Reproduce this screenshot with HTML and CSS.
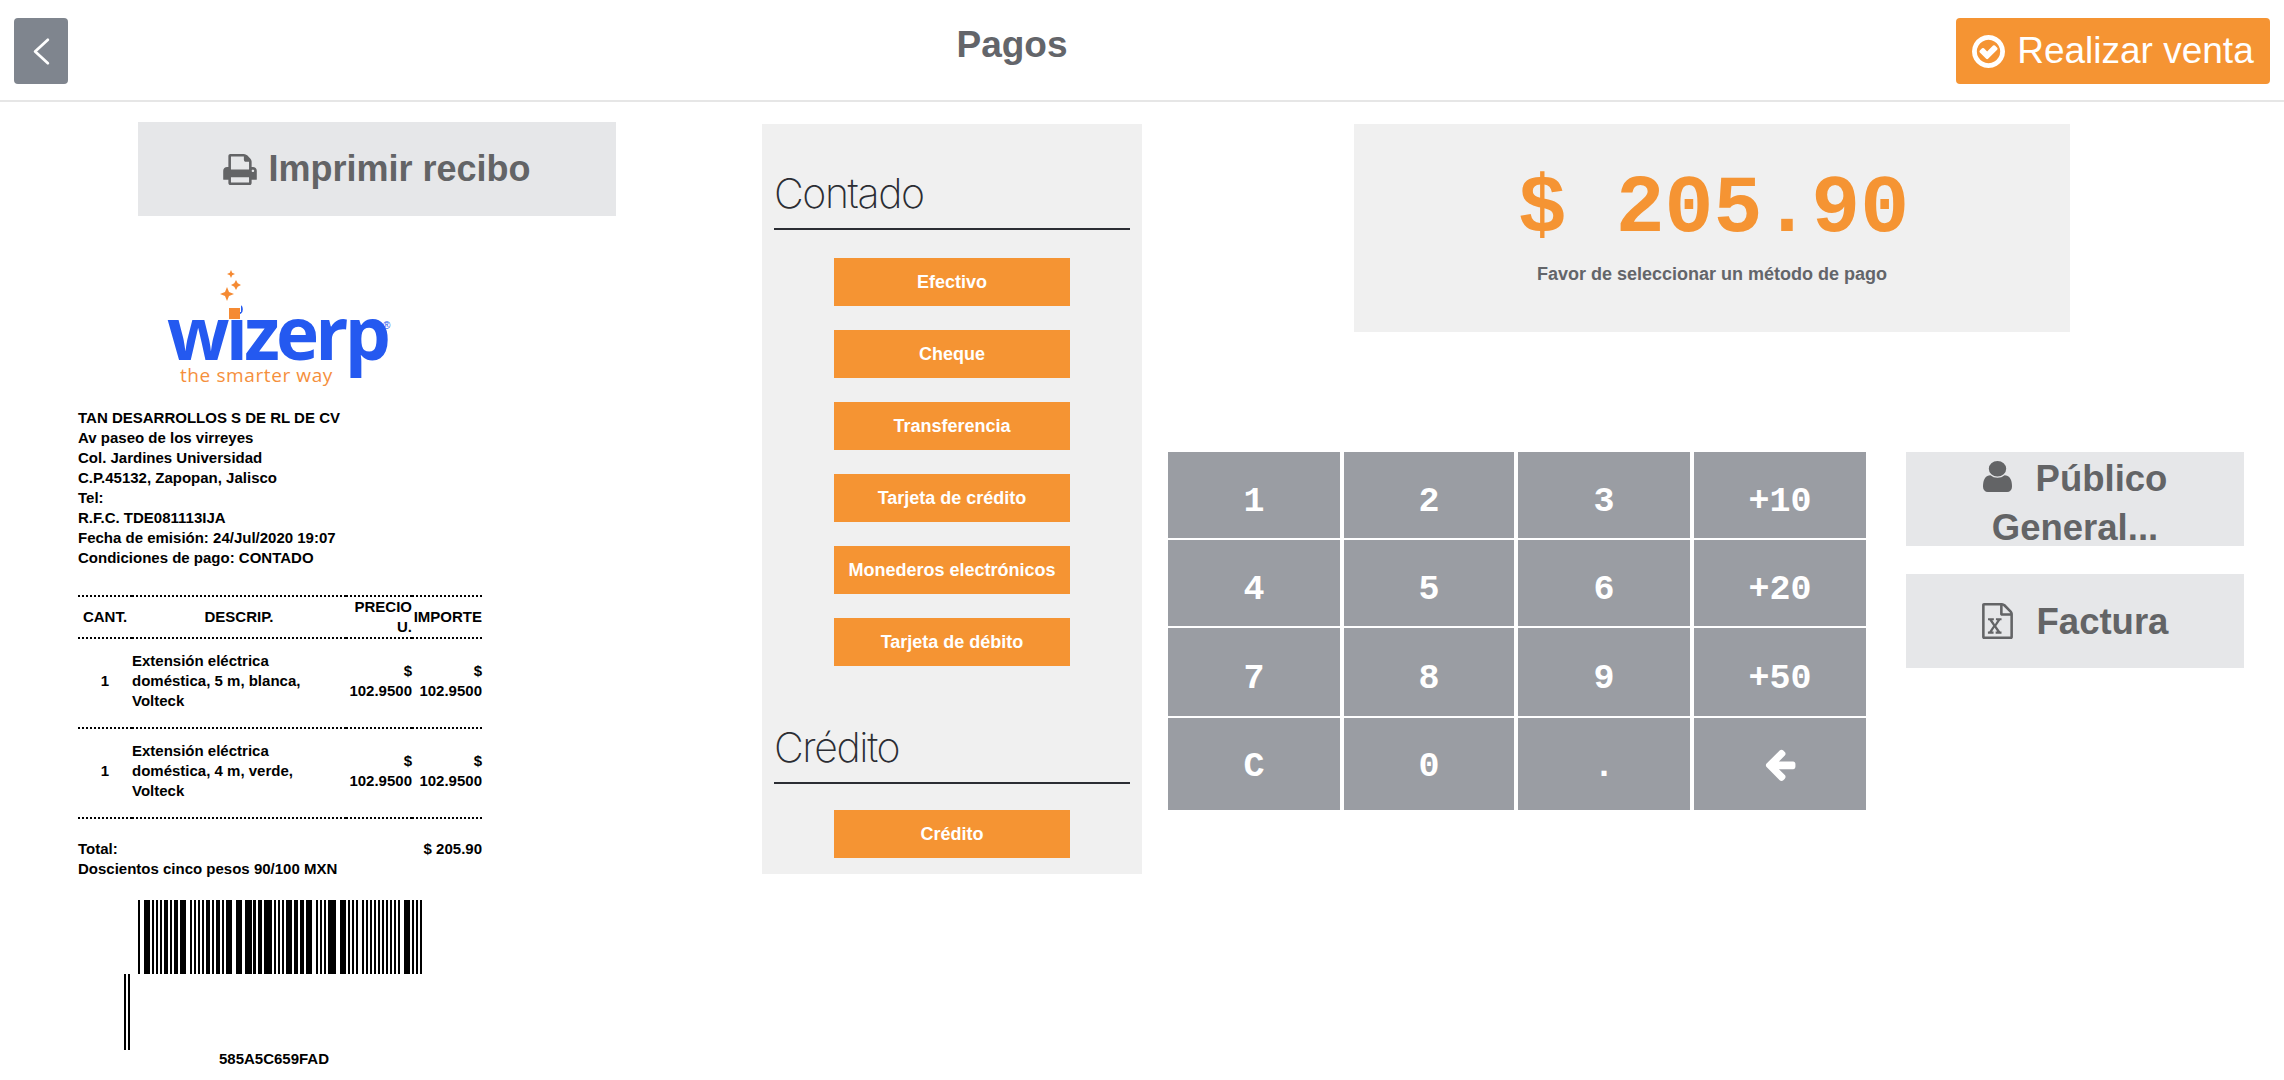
FILE: index.html
```html
<!DOCTYPE html>
<html lang="es">
<head>
<meta charset="utf-8">
<title>Pagos</title>
<link rel="stylesheet" href="styles.css">
</head>
<body>
<header class="topbar">
  <button class="back" aria-label="Volver">
    <svg class="back-icon" viewBox="0 0 16 26"><polyline points="14,2 2,13 14,24"/></svg>
  </button>
  <h1 class="title">Pagos</h1>
  <button class="sale">
    <svg class="sale-icon" viewBox="128 128 1536 1536"><path d="M1299 813l-422 422q-19 19-45 19t-45-19l-294-294q-19-19-19-45t19-45l102-102q19-19 45-19t45 19l147 147 275-275q19-19 45-19t45 19l102 102q19 19 19 45t-19 45zm141 83q0-148-73-273t-198-198-273-73-273 73-198 198-73 273 73 273 198 198 273 73 273-73 198-198 73-273zm224 0q0 209-103 385.5t-279.5 279.5-385.5 103-385.5-103-279.5-279.5-103-385.5 103-385.5 279.5-279.5 385.5-103 385.5 103 279.5 279.5 103 385.5z"/></svg>
    <span>Realizar venta</span>
  </button>
</header>

<main class="layout">
  <section class="left">
    <button class="print">
      <svg class="print-icon" viewBox="64 128 1664 1536"><path d="M448 1536h896v-256h-896v256zm0-640h896v-384h-160q-40 0-68-28t-28-68v-160h-640v640zm1152 64q0-26-19-45t-45-19-45 19-19 45 19 45 45 19 45-19 19-45zm128 0v416q0 13-9.5 22.5t-22.5 9.5h-224v160q0 40-28 68t-68 28h-960q-40 0-68-28t-28-68v-160h-224q-13 0-22.5-9.5t-9.5-22.5v-416q0-79 56.5-135.5t135.5-56.5h64v-544q0-40 28-68t68-28h672q40 0 88 20t76 48l152 152q28 28 48 76t20 88v256h64q79 0 135.5 56.5t56.5 135.5z"/></svg>
      <span>Imprimir recibo</span>
    </button>

    <div class="logo">
      <svg class="logo-stars" viewBox="0 0 26 36"><path d="M11 0l1.200 2.800 2.800 1.200-2.800 1.200-1.200 2.800-1.200-2.800-2.800-1.200 2.800-1.200zM16 10l1.700 3.300 3.300 1.700-3.300 1.700-1.700 3.300-1.700-3.300-3.300-1.700 3.300-1.700zM7 17l2 5 5 2-5 2-2 5-2-5-5-2 5-2z"/></svg>
      <span class="logo-dot"></span>
      <div class="logo-word">wizerp</div>
      <span class="logo-reg">®</span>
      <div class="logo-tag">the smarter way</div>
    </div>

    <div class="receipt">
      <p class="address">TAN DESARROLLOS S DE RL DE CV<br>Av paseo de los virreyes<br>Col. Jardines Universidad<br>C.P.45132, Zapopan, Jalisco<br>Tel:<br>R.F.C. TDE081113IJA<br>Fecha de emisión: 24/Jul/2020 19:07<br>Condiciones de pago: CONTADO</p>
      <table class="items">
        <colgroup><col class="c-qty"><col class="c-desc"><col class="c-price"><col class="c-total"></colgroup>
        <thead>
          <tr><th>CANT.</th><th>DESCRIP.</th><th class="num">PRECIO U.</th><th class="num">IMPORTE</th></tr>
        </thead>
        <tbody>
          <tr><td class="qty">1</td><td class="desc">Extensión eléctrica doméstica, 5 m, blanca, Volteck</td><td class="num">$ 102.9500</td><td class="num">$ 102.9500</td></tr>
          <tr><td class="qty">1</td><td class="desc">Extensión eléctrica doméstica, 4 m, verde, Volteck</td><td class="num">$ 102.9500</td><td class="num">$ 102.9500</td></tr>
        </tbody>
      </table>
      <div class="sum"><span>Total:</span><span>$ 205.90</span></div>
      <p class="words">Doscientos cinco pesos 90/100 MXN</p>
      <svg class="bars" viewBox="0 0 284 74"><path d="M0 0h2v74h-2zM6 0h6v74h-6zM14 0h2v74h-2zM18 0h2v74h-2zM22 0h2v74h-2zM26 0h4v74h-4zM32 0h2v74h-2zM36 0h4v74h-4zM42 0h6v74h-6zM52 0h2v74h-2zM56 0h2v74h-2zM60 0h2v74h-2zM64 0h2v74h-2zM68 0h4v74h-4zM74 0h2v74h-2zM78 0h4v74h-4zM84 0h2v74h-2zM88 0h4v74h-4zM92 0h2v74h-2zM98 0h6v74h-6zM107 0h7v74h-7zM115 0h3v74h-3zM120 0h4v74h-4zM126 0h8v74h-8zM136 0h2v74h-2zM140 0h2v74h-2zM144 0h2v74h-2zM148 0h6v74h-6zM156 0h4v74h-4zM162 0h4v74h-4zM168 0h6v74h-6zM178 0h2v74h-2zM182 0h2v74h-2zM186 0h2v74h-2zM190 0h8v74h-8zM202 0h6v74h-6zM210 0h2v74h-2zM214 0h2v74h-2zM218 0h2v74h-2zM224 0h2v74h-2zM228 0h2v74h-2zM232 0h2v74h-2zM236 0h2v74h-2zM240 0h2v74h-2zM244 0h2v74h-2zM248 0h2v74h-2zM252 0h2v74h-2zM256 0h2v74h-2zM260 0h2v74h-2zM266 0h6v74h-6zM274 0h2v74h-2zM278 0h2v74h-2zM282 0h2v74h-2z"/></svg>
      <svg class="bars-tail" viewBox="0 0 6 76"><path d="M0 0h2v76h-2zM4 0h2v76h-2z"/></svg>
      <div class="code">585A5C659FAD</div>
    </div>
  </section>

  <section class="methods">
    <h2 class="group first">Contado</h2>
    <div class="options">
      <button class="opt">Efectivo</button>
      <button class="opt">Cheque</button>
      <button class="opt">Transferencia</button>
      <button class="opt">Tarjeta de crédito</button>
      <button class="opt">Monederos electrónicos</button>
      <button class="opt">Tarjeta de débito</button>
    </div>
    <h2 class="group">Crédito</h2>
    <div class="options second">
      <button class="opt">Crédito</button>
    </div>
  </section>

  <section class="right">
    <div class="amount">
      <div class="amount-value">$ 205.90</div>
      <div class="amount-hint">Favor de seleccionar un método de pago</div>
    </div>
    <div class="lower">
      <div class="keypad">
        <button class="key">1</button><button class="key">2</button><button class="key">3</button><button class="key">+10</button>
        <button class="key">4</button><button class="key">5</button><button class="key">6</button><button class="key">+20</button>
        <button class="key">7</button><button class="key">8</button><button class="key">9</button><button class="key">+50</button>
        <button class="key">C</button><button class="key">0</button><button class="key">.</button>
        <button class="key" aria-label="Borrar"><svg class="key-icon" viewBox="0 0 1792 1792"><path d="M1664 896v128q0 53-32.500 90.500t-84.500 37.500h-704l293 294q38 36 38 90t-38 90l-75 76q-37 37-90 37-52 0-91-37l-651-652q-37-37-37-90 0-52 37-91l651-650q38-38 91-38 52 0 90 38l75 74q38 38 38 91t-38 91l-293 293h704q52 0 84.500 37.500t32.500 90.500z"/></svg></button>
      </div>
      <div class="side">
        <button class="side-btn client">
          <svg class="user-icon" viewBox="256 128 1280 1536" preserveAspectRatio="none"><path d="M1536 1399q0 109-62.500 187t-150.500 78h-854q-88 0-150.500-78t-62.500-187q0-85 8.500-160.500t31.500-152 58.500-131 94-89 134.500-34.500q131 128 313 128t313-128q76 0 134.500 34.500t94 89 58.500 131 31.500 152 8.500 160.500zm-256-887q0 159-112.500 271.500t-271.500 112.500-271.500-112.500-112.500-271.500 112.500-271.500 271.500-112.500 271.500 112.500 112.500 271.500z"/></svg>Público General...
        </button>
        <button class="side-btn invoice">
          <svg class="file-icon" viewBox="128 0 1536 1792"><path d="M1596 380q28 28 48 76t20 88v1152q0 40-28 68t-68 28h-1344q-40 0-68-28t-28-68v-1600q0-40 28-68t68-28h896q40 0 88 20t76 48zm-444-244v376h376q-10-29-22-41l-313-313q-12-12-41-22zm384 1528v-1024h-416q-40 0-68-28t-28-68v-416h-768v1536h1280zm-1117-245v106h281v-106h-75l103-161q5-7 10-16.500t7.500-13.500 3.500-4h2q1 4 5 10 2 4 4.500 7.500t6 8 6.500 8.500l107 161h-76v106h291v-106h-68l-192-273 195-282h67v-107h-279v107h74l-103 159q-4 7-10 16.500t-9 13.500l-2 3h-2q-1-4-5-10-6-11-17-23l-106-159h76v-107h-290v107h68l189 272-194 283h-68z"/></svg>Factura
        </button>
      </div>
    </div>
  </section>
</main>
</body>
</html>
```
FILE: styles.css
```css
* { box-sizing: border-box; }
html, body { margin: 0; padding: 0; }
body {
  width: 2284px;
  height: 1080px;
  overflow: hidden;
  background: #fff;
  font-family: "Liberation Sans", Arial, sans-serif;
  color: #000;
}
button { border: 0; padding: 0; margin: 0; font-family: inherit; cursor: pointer; }
p { margin: 0; }

/* top bar */
.topbar {
  height: 102px;
  padding: 18px 14px 0;
  border-bottom: 2px solid #e6e6e6;
  display: flex;
  justify-content: space-between;
  align-items: flex-start;
}
.back {
  width: 54px;
  height: 66px;
  background: #7f858e;
  border-radius: 4px;
  display: flex;
  align-items: center;
  justify-content: center;
}
.back-icon { width: 17px; height: 29px; fill: none; stroke: #fff; stroke-width: 2.6; stroke-linecap: round; stroke-linejoin: round; }
.title {
  margin: 0;
  font-size: 37px;
  line-height: 54px;
  font-weight: 700;
  color: #63656a;
}
.sale {
  width: 314px;
  height: 66px;
  background: #f59433;
  color: #fff;
  border-radius: 4px;
  font-size: 37px;
  display: flex;
  align-items: center;
  justify-content: center;
  gap: 12px;
}
.sale-icon { width: 33px; height: 33px; fill: #fff; }

/* columns */
.layout { display: flex; align-items: flex-start; }
.left { width: 762px; padding-top: 20px; flex: none; }
.print {
  margin-left: 138px;
  width: 478px;
  height: 94px;
  background: #e6e7e9;
  color: #636466;
  font-size: 36px;
  font-weight: 700;
  display: flex;
  align-items: center;
  justify-content: center;
  gap: 11px;
}
.print-icon { width: 34px; height: 31px; fill: #636466; }

/* logo */
.logo {
  position: relative;
  margin: 54px 0 0 167px;
  width: 226px;
  height: 117px;
}
.logo-stars { position: absolute; left: 53px; top: 0; width: 26px; height: 36px; fill: #f58a33; z-index: 2; }
.logo-dot {
  position: absolute;
  left: 62px;
  top: 38px;
  width: 11px;
  height: 11px;
  background: #f58a33;
  box-shadow: 0 -8px 0 1px #fff;
  z-index: 1;
}
.logo-word {
  padding-top: 20px;
  font-family: "Open Sans", sans-serif;
  font-weight: 700;
  font-size: 73px;
  line-height: 84px;
  letter-spacing: -3.8px;
  color: #2459f0;
}
.logo-reg { position: absolute; left: 216px; top: 50px; font-size: 10px; line-height: 12px; color: #2459f0; }
.logo-tag {
  position: absolute;
  left: 13px;
  top: 93px;
  font-family: "Open Sans", sans-serif;
  font-size: 19px;
  line-height: 24px;
  letter-spacing: 0.6px;
  color: #f58f3c;
}

/* receipt */
.receipt {
  margin: 21px 0 0 78px;
  width: 404px;
  font-size: 15px;
  line-height: 20px;
  font-weight: 700;
}
.address { height: 187px; }
.items { width: 404px; border-collapse: collapse; table-layout: fixed; }
.c-qty { width: 54px; }
.c-desc { width: 214px; }
.c-price { width: 66px; }
.c-total { width: 70px; }
.items th, .items td { padding: 0; font-weight: 700; border-top: 2px dotted #000; vertical-align: middle; }
.items th { text-align: center; }
.items td { padding: 12px 0 16px; }
.items .desc { padding-right: 30px; }
.items tbody tr:last-child td { border-bottom: 2px dotted #000; }
.items .num { text-align: right; }
.items .qty { text-align: center; }
.sum { display: flex; justify-content: space-between; margin-top: 20px; }
.bars { display: block; width: 284px; height: 74px; margin: 21px 0 0 60px; fill: #000; }
.bars-tail { display: block; width: 6px; height: 76px; margin-left: 46px; fill: #000; }
.code { width: 392px; text-align: center; line-height: 18px; }

/* payment methods */
.methods {
  width: 380px;
  flex: none;
  margin-top: 22px;
  padding: 0 12px 16px;
  background: #f0f0f0;
}
.group {
  margin: 0;
  padding-top: 49px;
  font-family: Inter, sans-serif;
  font-weight: 200;
  font-size: 41px;
  line-height: 64px;
  letter-spacing: -1.4px;
  color: #2b2d33;
  border-bottom: 2px solid #2b2d33;
  height: 118px;
}
.group.first { padding-top: 37px; height: 106px; }
.options { display: flex; flex-direction: column; align-items: center; gap: 24px; margin-top: 28px; }
.options.second { margin-top: 26px; }
.opt {
  width: 236px;
  height: 48px;
  background: #f59433;
  color: #fff;
  font-size: 18px;
  font-weight: 700;
}

/* right */
.right { margin-top: 22px; flex: none; }
.amount {
  margin-left: 212px;
  width: 716px;
  height: 208px;
  background: #f0f0f0;
  text-align: center;
  padding-top: 39px;
}
.amount-value {
  font-family: "Liberation Mono", monospace;
  font-weight: 700;
  font-size: 81.5px;
  line-height: 92px;
  padding-left: 3px;
  color: #f59433;
}
.amount-hint { margin-top: 7px; font-size: 18px; line-height: 24px; font-weight: 700; color: #63656a; }
.lower { display: flex; align-items: flex-start; margin: 120px 0 0 26px; gap: 40px; }
.keypad {
  display: grid;
  grid-template-columns: 172px 170px 172px 172px;
  grid-template-rows: 86px 86px 88px 92px;
  gap: 2px 4px;
}
.key {
  background: #9a9da3;
  color: #fff;
  font-family: "Liberation Mono", monospace;
  font-weight: 700;
  font-size: 35px;
  line-height: 38px;
  padding-top: 14px;
  display: flex;
  align-items: center;
  justify-content: center;
}
.key:nth-child(n+13) { padding-top: 6px; }
.key-icon { width: 36px; height: 36px; fill: #fff; margin-top: -6px; }
.side { display: flex; flex-direction: column; gap: 28px; }
.side-btn {
  width: 338px;
  height: 94px;
  background: #e6e7e9;
  color: #636466;
  font-size: 36.5px;
  line-height: 49px;
  font-weight: 700;
  text-align: center;
  overflow: hidden;
  display: block;
}
.client { padding: 2px 60px 0; }
.user-icon { width: 29px; height: 31px; margin-right: 24px; fill: #636466; vertical-align: -1px; }
.file-icon { width: 31px; height: 36px; margin-right: 24px; fill: #636466; vertical-align: -5px; }
```
